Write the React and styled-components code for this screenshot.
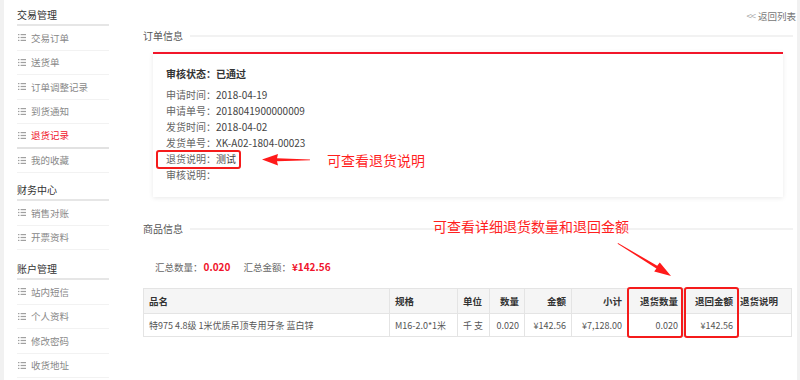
import React from 'react';
import styled, { createGlobalStyle } from 'styled-components';

const GlobalStyle = createGlobalStyle`
  body {
    margin: 0;
    font-family: "Noto Sans CJK SC", "Liberation Sans", sans-serif;
    background: #fff;
  }
`;

const menu = [
  { title: '交易管理', gap: 0, items: ['交易订单', '送货单', '订单调整记录', '到货通知', '退货记录', '我的收藏'] },
  { title: '财务中心', gap: 9, items: ['销售对账', '开票资料'] },
  { title: '账户管理', gap: 11, items: ['站内短信', '个人资料', '修改密码', '收货地址'] },
];

const info = [
  ['申请时间：', '2018-04-19'],
  ['申请单号：', '2018041900000009'],
  ['发货时间：', '2018-04-02'],
  ['发货单号：', 'XK-A02-1804-00023'],
];

const columns = [
  { name: '品名', width: 246, align: 'left' },
  { name: '规格', width: 68, align: 'left' },
  { name: '单位', width: 32, align: 'left' },
  { name: '数量', width: 35, align: 'right' },
  { name: '金额', width: 47, align: 'right' },
  { name: '小计', width: 56, align: 'right' },
  { name: '退货数量', width: 56, align: 'right' },
  { name: '退回金额', width: 55, align: 'right' },
  { name: '退货说明', width: 53, align: 'left', tight: true },
];

const row = ['特975 4.8级 1米优质吊顶专用牙条 蓝白锌', 'M16-2.0*1米', '千 支', '0.020', '¥142.56', '¥7,128.00', '0.020', '¥142.56', ''];

const ListIcon = () => (
  <svg width="8" height="7" viewBox="0 0 8 7">
    <g fill="#a0a0a0">
      <rect x="0" y="0" width="1.4" height="1.2" />
      <rect x="2.6" y="0" width="5.4" height="1.2" />
      <rect x="0" y="2.9" width="1.4" height="1.2" />
      <rect x="2.6" y="2.9" width="5.4" height="1.2" />
      <rect x="0" y="5.8" width="1.4" height="1.2" />
      <rect x="2.6" y="5.8" width="5.4" height="1.2" />
    </g>
  </svg>
);

const App = () => {
  return (
    <Frame>
      <GlobalStyle />
      <Sidebar>
        {menu.map(group => (
          <Group key={group.title} gap={group.gap}>
            <GroupTitle>{group.title}</GroupTitle>
            {group.items.map(item => (
              <MenuItem key={item} active={item === '退货记录'}>
                <ListIcon />
                <span>{item}</span>
              </MenuItem>
            ))}
          </Group>
        ))}
      </Sidebar>

      <Main>
        <TopBar>
          <BackLink>
            <Chevrons>&lt;&lt;</Chevrons>返回列表
          </BackLink>
        </TopBar>

        <SectionTitle>订单信息</SectionTitle>
        <Card>
          <StatusLine>审核状态：已通过</StatusLine>
          {info.map(([label, value]) => (
            <InfoRow key={label}>
              <Label>{label}</Label>
              <Value>{value}</Value>
            </InfoRow>
          ))}
          <InfoRow>
            <Label>退货说明：</Label>
            <Value>测试</Value>
            <MarkBox style={{ left: -10, top: -1, width: 85, height: 19 }} />
          </InfoRow>
          <InfoRow>
            <Label>审核说明：</Label>
            <Value />
          </InfoRow>
        </Card>

        <SectionTitle second>商品信息</SectionTitle>
        <Summary>
          <span>汇总数量：</span>
          <Amount>0.020</Amount>
          <span>汇总金额：</span>
          <Amount tight>¥142.56</Amount>
        </Summary>

        <TableWrap>
          <Table>
            <colgroup>
              {columns.map(c => (
                <col key={c.name} style={{ width: c.width }} />
              ))}
            </colgroup>
            <thead>
              <tr>
                {columns.map(c => (
                  <Th key={c.name} align={c.align} tight={c.tight}>
                    {c.name}
                  </Th>
                ))}
              </tr>
            </thead>
            <tbody>
              <tr>
                {row.map((v, i) => (
                  <Td key={i} align={columns[i].align} tight={columns[i].tight}>
                    {v}
                  </Td>
                ))}
              </tr>
            </tbody>
          </Table>
          <MarkBox style={{ left: 484, top: -1, width: 56, height: 51 }} />
          <MarkBox style={{ left: 541, top: -1, width: 55, height: 51 }} />
        </TableWrap>
      </Main>

      <Note style={{ left: 327, top: 151 }}>可查看退货说明</Note>
      <Note style={{ left: 433, top: 217 }}>可查看详细退货数量和退回金额</Note>
      <Arrows width="800" height="380" viewBox="0 0 800 380">
        <polygon
          fill="#ff1a1a"
          points="262,159.5 278,154 277,158.2 310,159.6 310,160.2 277,161.2 278,165.5"
        />
        <polygon
          fill="#ff1a1a"
          points="618,243 657.2,265.8 659.8,262.6 671,276 654.2,271.4 656.4,268.4 617.6,243.8"
        />
      </Arrows>
    </Frame>
  );
};

export default App;

const Frame = styled.div`
  position: relative;
  display: flex;
  width: 800px;
  height: 380px;
  overflow: hidden;
  box-shadow: inset 4px 0 0 #f1f1f1, inset -3px 0 0 #f1f1f1;
`;

const Sidebar = styled.div`
  width: 113px;
  flex-shrink: 0;
  padding: 7px 0 0 17px;
`;

const Group = styled.div`
  width: 92px;
  margin-top: ${p => p.gap}px;
`;

const GroupTitle = styled.div`
  height: 17px;
  line-height: 16px;
  font-size: 10px;
  color: #333;
  border-bottom: 2px solid #e6e6e6;
`;

const MenuItem = styled.div`
  display: flex;
  align-items: center;
  gap: 5px;
  height: 24.5px;
  padding-left: 1px;
  box-sizing: border-box;
  font-size: 9.5px;
  color: ${p => (p.active ? '#f0142d' : '#888')};
  border-bottom: ${p => (p.active ? '2px solid #e2e2e2' : '1px solid #f2f2f2')};
`;

const Main = styled.div`
  flex: 1;
  padding: 0 7px 0 13px;
  min-width: 0;
`;

const TopBar = styled.div`
  display: flex;
  justify-content: flex-end;
  padding-top: 10px;
  height: 12px;
  margin-right: -3px;
`;

const BackLink = styled.span`
  font-size: 9.5px;
  line-height: 12px;
  color: #777;
`;

const Chevrons = styled.span`
  color: #aaa;
  letter-spacing: -1px;
  margin-right: 3px;
`;

const SectionTitle = styled.div`
  display: flex;
  align-items: center;
  margin-top: ${p => (p.second ? '25px' : '7px')};
  font-size: 10px;
  line-height: 14px;
  color: #555;

  &::after {
    content: '';
    flex: 1;
    height: 2px;
    margin-left: 7px;
    background: #f2f2f2;
  }
`;

const Card = styled.div`
  margin: 9px 10px 0 10px;
  padding: 12px 13px 14px;
  border-top: 2px solid #f2162a;
  box-shadow: 0 1px 5px rgba(0, 0, 0, 0.09);
`;

const StatusLine = styled.div`
  font-size: 10px;
  line-height: 16px;
  font-weight: bold;
  color: #333;
  margin-bottom: 5px;
`;

const InfoRow = styled.div`
  position: relative;
  display: flex;
  font-size: 10px;
  line-height: 16px;
`;

const Label = styled.span`
  width: 50px;
  color: #666;
`;

const Value = styled.span`
  color: #444;
`;

const MarkBox = styled.div`
  position: absolute;
  box-sizing: border-box;
  border: 2px solid #f51b1b;
  border-radius: 3px;
`;

const Summary = styled.div`
  display: flex;
  align-items: center;
  margin-top: 24px;
  padding-left: 12px;
  font-size: 9.5px;
  line-height: 14px;
  color: #666;
`;

const Amount = styled.span`
  font-size: 10px;
  font-weight: bold;
  color: #f0142d;
  margin: 0 ${p => (p.tight ? '0' : '13px')} 0 1px;
`;

const TableWrap = styled.div`
  position: relative;
  margin-top: 14px;
  width: 648px;
`;

const Table = styled.table`
  width: 648px;
  border-collapse: collapse;
  table-layout: fixed;
  font-size: 9.5px;
`;

const Th = styled.th`
  height: 25px;
  padding: 0 ${p => (p.tight ? '0 0 1px' : '5px')};
  background: #f5f5f5;
  border: 1px solid #e4e4e4;
  text-align: ${p => p.align};
  font-weight: bold;
  color: #333;
  white-space: nowrap;
  box-sizing: border-box;
`;

const Td = styled.td`
  height: 23px;
  padding: 0 ${p => (p.tight ? '0 0 1px' : '5px')};
  border: 1px solid #e4e4e4;
  text-align: ${p => p.align};
  font-size: 9px;
  color: #555;
  white-space: nowrap;
  overflow: hidden;
  box-sizing: border-box;
`;

const Note = styled.div`
  position: absolute;
  font-size: 14px;
  line-height: 18px;
  color: #ff1f1f;
  white-space: nowrap;
`;

const Arrows = styled.svg`
  position: absolute;
  left: 0;
  top: 0;
  pointer-events: none;
`;
